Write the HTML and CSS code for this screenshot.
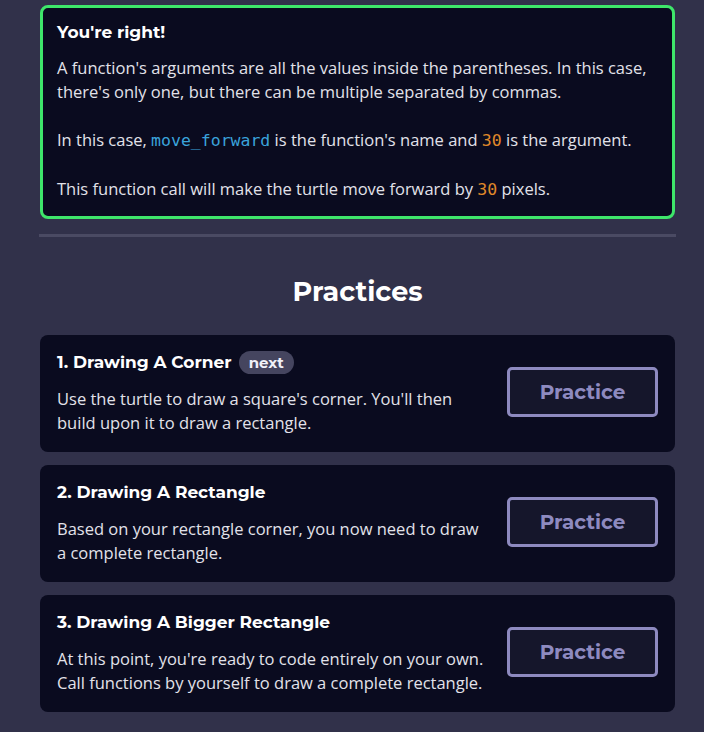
FILE: index.html
```html
<!DOCTYPE html>
<html>
<head>
<meta charset="utf-8">
<link rel="stylesheet" href="styles.css">
</head>
<body>
<main class="page">
  <section class="feedback">
    <h3 class="feedback-title">You're right!</h3>
    <p>A function's arguments are all the values inside the parentheses. In this case, there's only one, but there can be multiple separated by commas.</p>
    <p>In this case, <code class="fn">move_forward</code> is the function's name and <code class="num">30</code> is the argument.</p>
    <p>This function call will make the turtle move forward by <code class="num">30</code> pixels.</p>
  </section>
  <hr class="divider">
  <h2 class="section-title">Practices</h2>
  <div class="cards">
    <article class="card">
      <div class="card-body">
        <h4 class="card-title">1. Drawing A Corner <span class="badge">next</span></h4>
        <p>Use the turtle to draw a square's corner. You'll then build upon it to draw a rectangle.</p>
      </div>
      <button class="btn">Practice</button>
    </article>
    <article class="card">
      <div class="card-body">
        <h4 class="card-title">2. Drawing A Rectangle</h4>
        <p>Based on your rectangle corner, you now need to draw a complete rectangle.</p>
      </div>
      <button class="btn">Practice</button>
    </article>
    <article class="card">
      <div class="card-body">
        <h4 class="card-title">3. Drawing A Bigger Rectangle</h4>
        <p>At this point, you're ready to code entirely on your own. Call functions by yourself to draw a complete rectangle.</p>
      </div>
      <button class="btn">Practice</button>
    </article>
  </div>
</main>
</body>
</html>
```

FILE: styles.css
```css
html, body {
  margin: 0;
  padding: 0;
  background: #31314a;
}
body {
  font-family: "Open Sans", "Noto Sans", sans-serif;
  color: #e2e2ea;
}
.page {
  padding: 5px 29px 20px 40px;
}
.feedback {
  background: #0a0b1f;
  border: 3px solid #3ee66a;
  border-radius: 8px;
  padding: 12px 14px 14px;
}
.feedback-title {
  font-family: "Montserrat", "Inter", sans-serif;
  font-weight: 700;
  font-size: 17px;
  line-height: 24px;
  margin: 0 0 12px;
  color: #ffffff;
}
.feedback p {
  font-size: 16.5px;
  line-height: 24px;
  margin: 0 0 24px;
}
.feedback p:last-child {
  margin-bottom: 0;
}
code {
  font-family: "DejaVu Sans Mono", "Liberation Mono", monospace;
  font-size: 16.5px;
}
.fn { color: #3aa3db; }
.num { color: #e0892a; }
.divider {
  border: 0;
  height: 3px;
  background: #4a4a63;
  margin: 15px -1px 0 -1px;
}
.section-title {
  font-family: "Montserrat", "Inter", sans-serif;
  font-weight: 700;
  font-size: 27px;
  text-align: center;
  color: #ffffff;
  margin: 37px 0 25px;
  line-height: 36px;
}
.cards {
  display: flex;
  flex-direction: column;
  gap: 13px;
}
.card {
  background: #0a0b1f;
  border-radius: 8px;
  padding: 14px 17px 17px 17px;
  display: flex;
  align-items: center;
  gap: 22px;
}
.card-body {
  flex: 1;
}
.card-title {
  font-family: "Montserrat", "Inter", sans-serif;
  font-weight: 700;
  font-size: 17px;
  line-height: 26px;
  margin: 0 0 12px;
  color: #ffffff;
  display: flex;
  align-items: center;
  gap: 7px;
}
.badge {
  font-size: 15px;
  background: #45455f;
  border-radius: 12px;
  padding: 0 10px;
  line-height: 23px;
  color: #f0f0f8;
}
.card p {
  font-size: 16.5px;
  line-height: 24px;
  margin: 0;
  color: #e2e2ea;
}
.btn {
  flex: none;
  width: 151px;
  height: 50px;
  background: #15162b;
  border: 3px solid #8e8ac0;
  border-radius: 5px;
  color: #8e8ac0;
  font-family: "Montserrat", "Inter", sans-serif;
  font-weight: 700;
  font-size: 20px;
}
```
